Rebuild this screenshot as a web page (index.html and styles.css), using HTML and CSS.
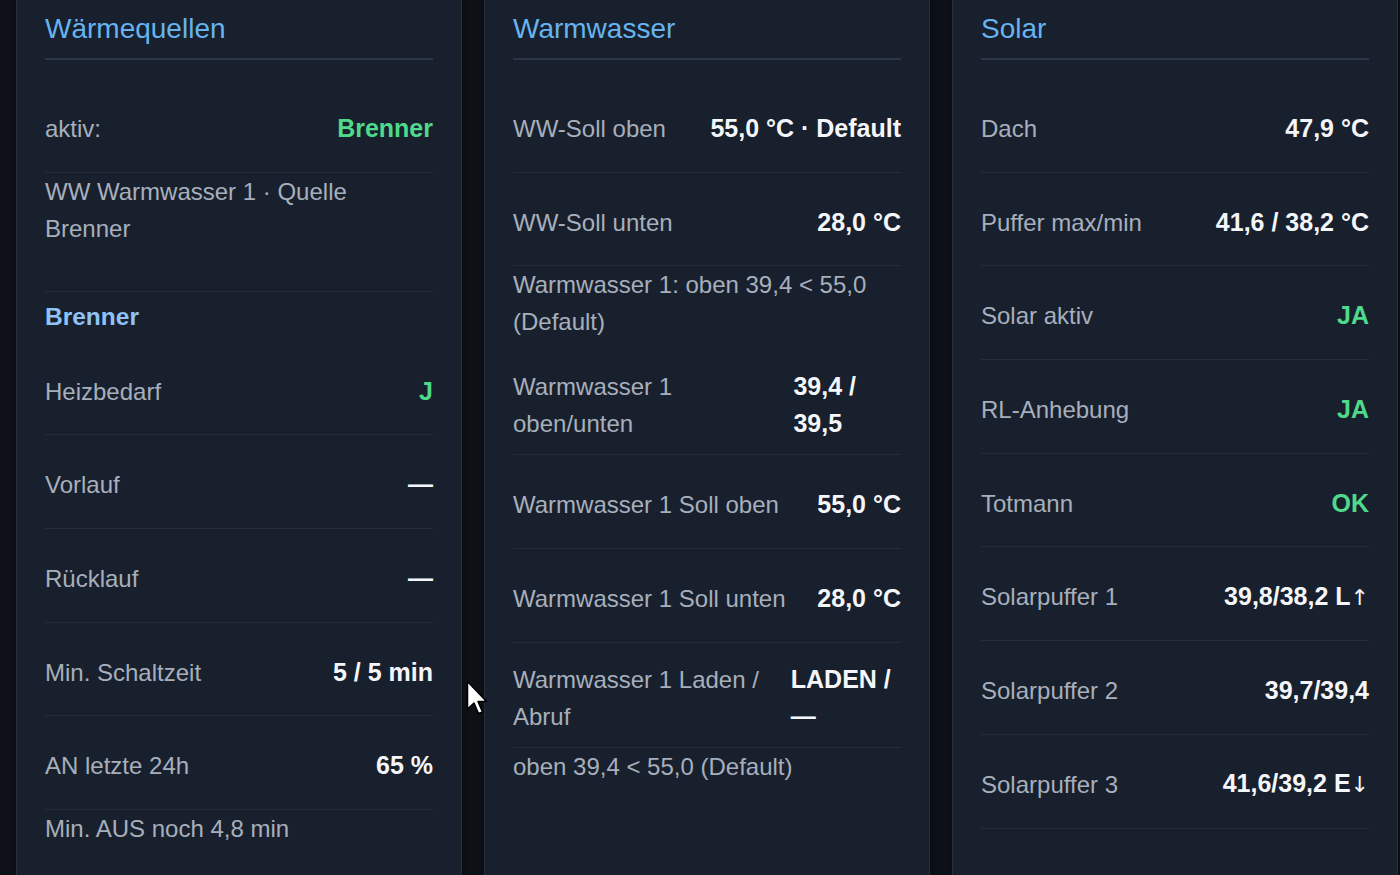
FILE: index.html
```html
<!DOCTYPE html>
<html lang="de">
<head>
  <meta charset="UTF-8">
  <meta name="viewport" content="width=device-width, initial-scale=1.0">
  <title>Heizung</title>
  <link rel="stylesheet" href="styles.css">
</head>
<body>
  <main class="grid">
    <section class="card">
      <h2 class="card-title">Wärmequellen</h2>
      <div class="row"><span class="label">aktiv:</span><span class="value ok">Brenner</span></div>
      <div class="row src"><span class="label">WW Warmwasser 1 · Quelle Brenner</span></div>
      <h3 class="sub">Brenner</h3>
      <div class="row"><span class="label">Heizbedarf</span><span class="value ok">J</span></div>
      <div class="row"><span class="label">Vorlauf</span><span class="value">—</span></div>
      <div class="row"><span class="label">Rücklauf</span><span class="value">—</span></div>
      <div class="row"><span class="label">Min. Schaltzeit</span><span class="value">5 / 5 min</span></div>
      <div class="row"><span class="label">AN letzte 24h</span><span class="value">65 %</span></div>
      <p class="note">Min. AUS noch 4,8 min</p>
    </section>

    <section class="card">
      <h2 class="card-title">Warmwasser</h2>
      <div class="row"><span class="label">WW-Soll oben</span><span class="value">55,0 °C · Default</span></div>
      <div class="row"><span class="label">WW-Soll unten</span><span class="value">28,0 °C</span></div>
      <p class="note spaced">Warmwasser 1: oben 39,4 &lt; 55,0 (Default)</p>
      <div class="row"><span class="label">Warmwasser 1 oben/unten</span><span class="value">39,4 / 39,5</span></div>
      <div class="row"><span class="label">Warmwasser 1 Soll oben</span><span class="value">55,0 °C</span></div>
      <div class="row"><span class="label">Warmwasser 1 Soll unten</span><span class="value">28,0 °C</span></div>
      <div class="row"><span class="label">Warmwasser 1 Laden / Abruf</span><span class="value">LADEN / —</span></div>
      <p class="note">oben 39,4 &lt; 55,0 (Default)</p>
    </section>

    <section class="card">
      <h2 class="card-title">Solar</h2>
      <div class="row"><span class="label">Dach</span><span class="value">47,9 °C</span></div>
      <div class="row"><span class="label">Puffer max/min</span><span class="value">41,6 / 38,2 °C</span></div>
      <div class="row"><span class="label">Solar aktiv</span><span class="value ok">JA</span></div>
      <div class="row"><span class="label">RL-Anhebung</span><span class="value ok">JA</span></div>
      <div class="row"><span class="label">Totmann</span><span class="value ok">OK</span></div>
      <div class="row"><span class="label">Solarpuffer 1</span><span class="value">39,8/38,2 L<span class="arrow">↑</span></span></div>
      <div class="row"><span class="label">Solarpuffer 2</span><span class="value">39,7/39,4</span></div>
      <div class="row"><span class="label">Solarpuffer 3</span><span class="value">41,6/39,2 E<span class="arrow">↓</span></span></div>
    </section>
  </main>

  <svg class="cursor" width="24" height="38" viewBox="0 0 24 38">
    <path d="M1.5 1.5 L1.5 29 L8 23 L12.5 33.5 L16.5 32 L12 21.5 L20.5 21.5 Z" fill="#fff" stroke="#000" stroke-width="1.5" stroke-linejoin="round"/>
  </svg>
</body>
</html>
```

FILE: styles.css
```css
html, body {
  margin: 0;
  height: 875px;
  overflow: hidden;
  background: #0e1218;
}
body {
  font-family: "Liberation Sans", Arial, sans-serif;
  color: #a7afbc;
  position: relative;
}
.grid {
  display: grid;
  grid-template-columns: repeat(3, 446px);
  gap: 22px;
  padding-left: 16px;
  margin-top: -10px;
}
.card {
  background: #19202d;
  border: 1px solid #272f3d;
  border-radius: 8px;
  box-shadow: 0 0 10px rgba(0, 0, 0, 0.55);
  padding: 21px 28px 0;
  min-height: 920px;
}
.card-title {
  margin: 0 0 19px;
  padding-bottom: 12px;
  border-bottom: 2px solid #2c3545;
  color: #66b4ef;
  font-size: 28px;
  font-weight: normal;
  line-height: 34px;
}
.row {
  display: flex;
  justify-content: space-between;
  align-items: center;
  gap: 20px;
  box-sizing: border-box;
  min-height: 93.7px;
  padding: 18px 0 12px;
  border-bottom: 1px solid #252d3b;
  font-size: 24px;
  line-height: 37px;
}
.row.src {
  align-items: flex-start;
  padding: 0 10px 44px 0;
  min-height: 0;
}
.label {
  color: #a7afbc;
}
.value {
  color: #f4f6f9;
  font-weight: bold;
  font-size: 25px;
}
.value.ok {
  color: #4fd98a;
}
.arrow {
  font-family: "DejaVu Sans", sans-serif;
  font-weight: normal;
  font-size: 22px;
}
.sub {
  margin: 0;
  padding: 6px 0 7px;
  color: #8fc3f7;
  font-size: 24.5px;
  line-height: 37px;
}
.note {
  margin: 0;
  font-size: 24px;
  line-height: 37px;
}
.note.spaced {
  margin-bottom: 10px;
}
.cursor {
  position: absolute;
  left: 466px;
  top: 680px;
}
```
